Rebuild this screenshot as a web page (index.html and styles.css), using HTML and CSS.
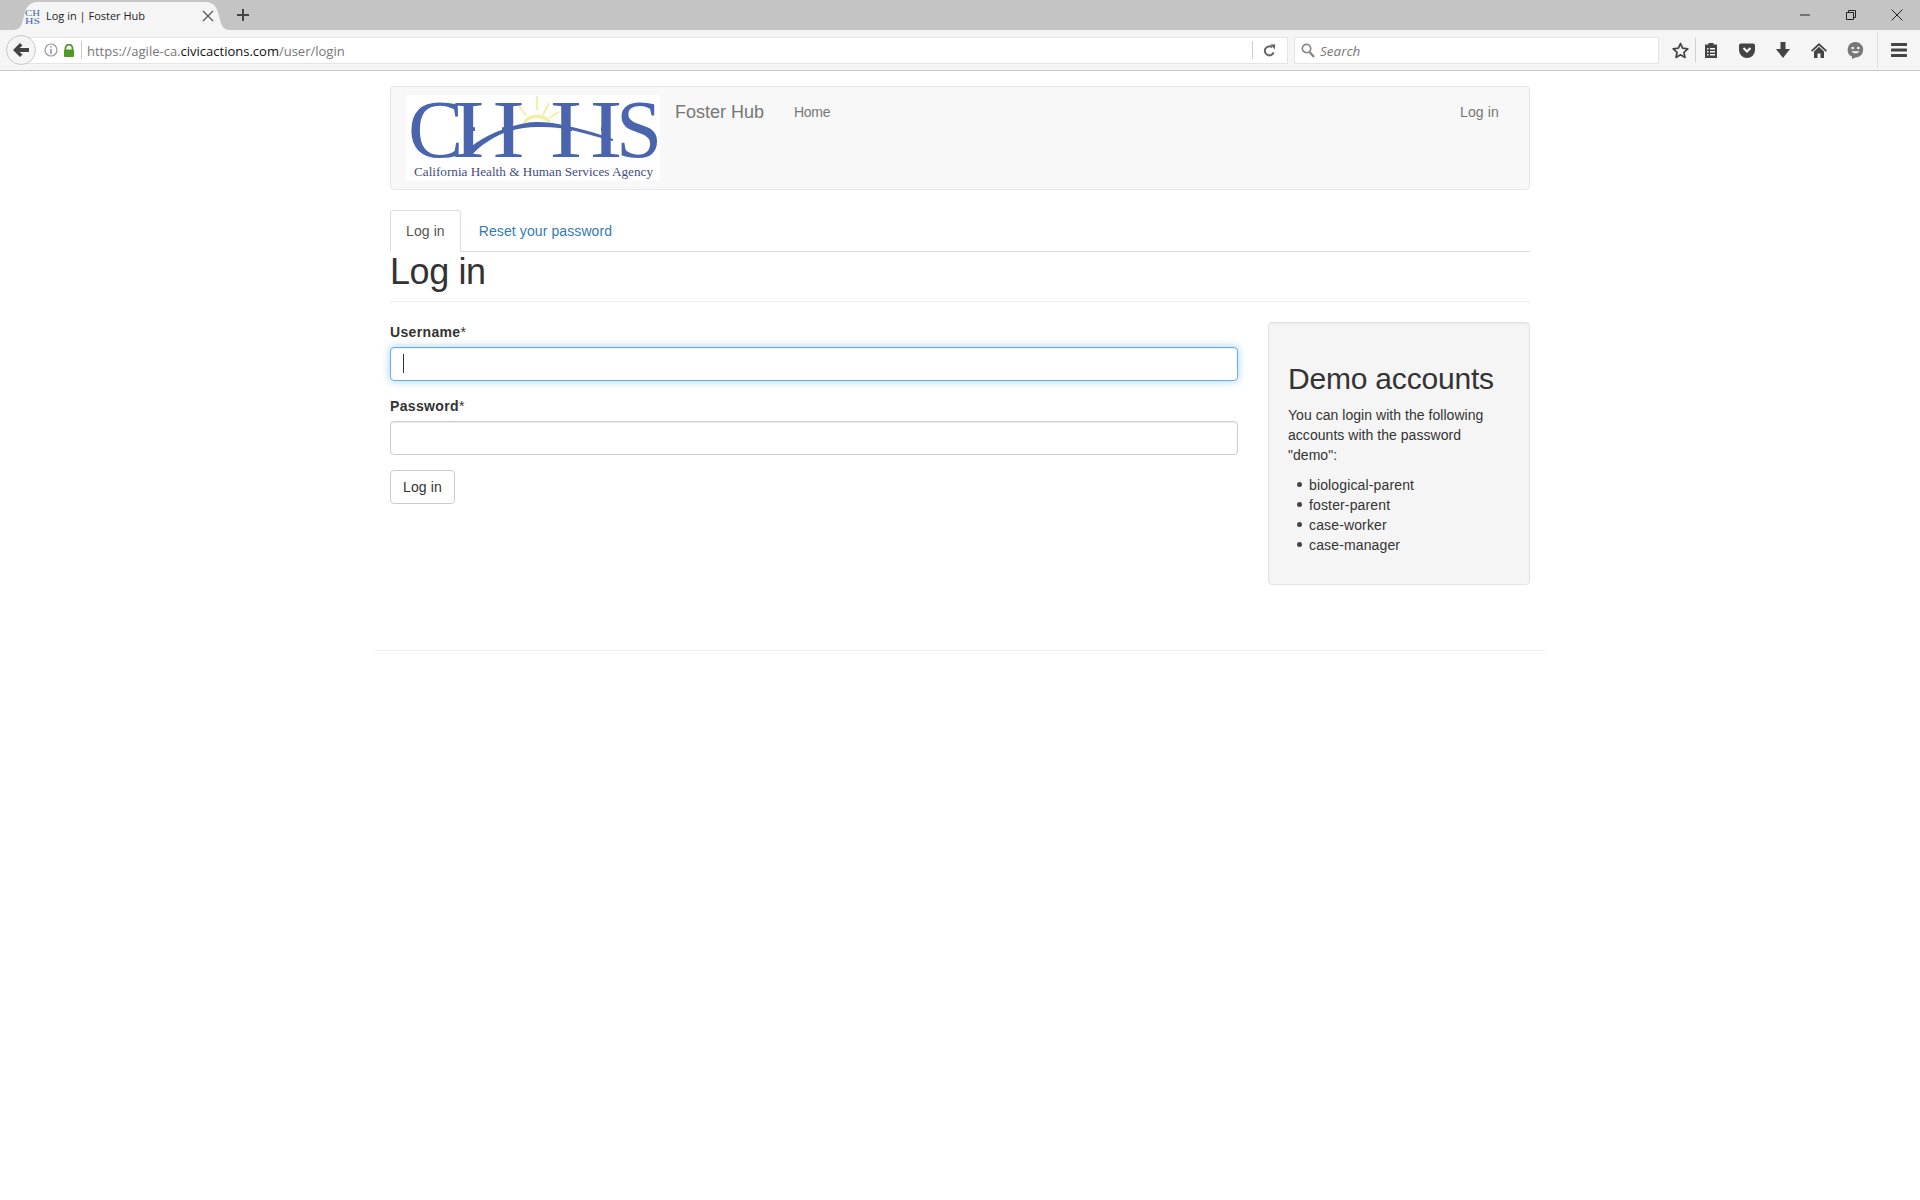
FILE: index.html
```html
<!DOCTYPE html>
<html lang="en">
<head>
    <meta charset="UTF-8">
    <title>Log in | Foster Hub</title>
    <link rel="stylesheet" href="styles.css">
</head>
<body>
    <!-- browser chrome -->
    <div class="tabstrip">
        <div class="tab">
            <svg class="tab-shape" width="217" height="28" viewBox="0 0 217 28"><path d="M0 28C8 28 9 22 11 14C13 5 16 0 25 0H192C201 0 204 5 206 14C208 22 209 28 217 28Z" fill="#f5f5f5"/></svg>
            <svg class="favicon" width="16" height="16" viewBox="0 0 16 16"><text x="0" y="7.5" class="favicon-text" textLength="15" lengthAdjust="spacingAndGlyphs">CH</text><text x="0" y="15.5" class="favicon-text" textLength="15" lengthAdjust="spacingAndGlyphs">HS</text></svg>
            <span class="tab-title">Log in | Foster Hub</span>
            <svg class="tab-close" width="12" height="12" viewBox="0 0 12 12"><path d="M1 1L11 11M11 1L1 11" stroke="#555" stroke-width="1.2" fill="none"/></svg>
        </div>
        <svg class="new-tab" width="12" height="12" viewBox="0 0 12 12"><path d="M6 0V12M0 6H12" stroke="#444" stroke-width="2" fill="none"/></svg>
        <div class="window-btns">
            <div class="window-btn"><svg width="10" height="10" viewBox="0 0 10 10"><path d="M0 5H10" stroke="#222" fill="none"/></svg></div>
            <div class="window-btn"><svg width="10" height="10" viewBox="0 0 10 10"><path d="M.5 2.5H7.5V9.5H.5ZM2.5 2.5V.5H9.5V7.5H7.5" stroke="#222" fill="none"/></svg></div>
            <div class="window-btn"><svg width="12" height="12" viewBox="0 0 12 12"><path d="M.5 .5L11.5 11.5M11.5 .5L.5 11.5" stroke="#222" fill="none"/></svg></div>
        </div>
    </div>
    <div class="toolbar">
        <div class="back-btn">
            <svg width="16" height="14" viewBox="0 0 16 14"><path d="M7 0L0 7L7 14L9.5 11.6L6.6 9H16V5H6.6L9.5 2.4Z" fill="#444"/></svg>
        </div>
        <div class="urlbar">
            <svg class="info-icon" width="14" height="14" viewBox="0 0 14 14"><circle cx="7" cy="7" r="6" fill="none" stroke="#999" stroke-width="1.2"/><path d="M6.2 3H7.8V4.6H6.2ZM6.2 6H7.8V11H6.2Z" fill="#999"/></svg>
            <svg class="lock-icon" width="12" height="13" viewBox="0 0 12 13"><path d="M2.5 6V4A3.5 3.5 0 0 1 9.5 4V6" fill="none" stroke="#4f9a24" stroke-width="1.8"/><rect x="1" y="5.5" width="10" height="7.5" rx="1" fill="#4f9a24"/></svg>
            <span class="url-sep"></span>
            <span class="url">https://agile-ca.<b>civicactions.com</b>/user/login</span>
            <span class="url-sep reload-sep"></span>
            <svg class="reload-icon" width="13" height="13" viewBox="0 0 13 13"><path d="M10.6 8.4A4.5 4.5 0 1 1 9 3.2" fill="none" stroke="#666" stroke-width="2"/><path d="M7.4 .2L12.4 .6L11.6 5.6Z" fill="#666"/></svg>
        </div>
        <div class="searchbar">
            <svg width="14" height="15" viewBox="0 0 14 15"><circle cx="5.5" cy="5.5" r="4.2" fill="none" stroke="#888" stroke-width="1.7"/><path d="M8.5 9L13 14" stroke="#888" stroke-width="2.4"/></svg>
            <span class="search-text">Search</span>
        </div>
        <div class="actions">
            <div class="action star-btn"><svg width="17" height="17" viewBox="0 0 17 17"><path d="M8.5 1.5L10.6 6.2L15.8 6.8L11.9 10.3L13 15.4L8.5 12.8L4 15.4L5.1 10.3L1.2 6.8L6.4 6.2Z" fill="none" stroke="#444" stroke-width="1.7" stroke-linejoin="round"/></svg></div>
            <div class="action clip-btn"><svg width="14" height="16" viewBox="0 0 14 16"><path d="M1 2.5H4.5V1H9.5V2.5H13V16H1Z" fill="#444"/><path d="M3 6H4.5V7.5H3ZM6 6H11V7.5H6ZM3 9H4.5V10.5H3ZM6 9H11V10.5H6ZM3 12H4.5V13.5H3ZM6 12H11V13.5H6Z" fill="#f5f5f5"/></svg></div>
            <div class="action"><svg width="16" height="15" viewBox="0 0 16 15"><path d="M0 2.5A2 2 0 0 1 2 .5H14A2 2 0 0 1 16 2.5V7A8 8 0 0 1 0 7Z" fill="#444"/><path d="M4.5 5L8 8.5L11.5 5" fill="none" stroke="#f5f5f5" stroke-width="2.2"/></svg></div>
            <div class="action"><svg width="14" height="16" viewBox="0 0 14 16"><path d="M4.5 0H9.5V7H14L7 16L0 7H4.5Z" fill="#444"/></svg></div>
            <div class="action"><svg width="16" height="16" viewBox="0 0 16 16"><path d="M8 1L16 8.5L14.8 9.7L8 3.4L1.2 9.7L0 8.5Z" fill="#444"/><path d="M8 4.8L13 9.4V16H9.5V11.5H6.5V16H3V9.4Z" fill="#444"/></svg></div>
            <div class="action"><svg width="17" height="17" viewBox="0 0 17 17"><path d="M8.5 0A7.7 7.7 0 0 1 8.5 15.4L5 17V14.6A7.7 7.7 0 0 1 8.5 0Z" fill="#777"/><circle cx="5.7" cy="6" r="1.3" fill="#f5f5f5"/><circle cx="11.3" cy="6" r="1.3" fill="#f5f5f5"/><path d="M4.5 9.2C6 12 11 12 12.5 9.2Z" fill="#f5f5f5"/></svg></div>
            <div class="action menu-btn"><svg width="16" height="14" viewBox="0 0 16 14"><path d="M1 0H15A1 1 0 0 1 15 3H1A1 1 0 0 1 1 0ZM1 5.5H15A1 1 0 0 1 15 8.5H1A1 1 0 0 1 1 5.5ZM1 11H15A1 1 0 0 1 15 14H1A1 1 0 0 1 1 11Z" fill="#444"/></svg></div>
        </div>
    </div>

    <!-- page -->
    <div class="container">
        <nav class="navbar">
            <svg class="logo" width="254" height="86" viewBox="0 0 254 86">
                <defs>
                    <!-- hides the straight crossbar of each H, the arc stands in for it -->
                    <clipPath id="h-left">
                        <rect x="40" y="-20" width="80" height="44"/>
                        <rect x="40" y="44" width="80" height="30"/>
                        <rect x="40" y="20" width="29" height="30"/>
                        <rect x="96" y="20" width="24" height="30"/>
                    </clipPath>
                    <clipPath id="h-right">
                        <rect x="140" y="-20" width="80" height="44"/>
                        <rect x="140" y="44" width="80" height="30"/>
                        <rect x="140" y="20" width="26" height="30"/>
                        <rect x="195" y="20" width="24" height="30"/>
                    </clipPath>
                </defs>
                <rect width="254" height="86" fill="#fff"/>
                <path d="M117 28C120 17 141 17 145 27L141 27C136 22 125 22 120 28Z" fill="#f4efa8"/>
                <path d="M131 1V15M112 9L120 21M143 8L137 20M153 17L143 23" stroke="#f4efa8" stroke-width="2" fill="none"/>
                <text x="2" y="62" class="logo-big">C</text>
                <g clip-path="url(#h-left)"><text x="46.5" y="62" class="logo-big" textLength="72" lengthAdjust="spacingAndGlyphs">H</text></g>
                <g clip-path="url(#h-right)"><text x="144" y="62" class="logo-big" textLength="72" lengthAdjust="spacingAndGlyphs">H</text></g>
                <text x="210" y="62" class="logo-big">S</text>
                <path d="M56 61C66 48 84 38 104 32C113 29 122 27 131 27C140 27 149 28 157 30C172 33 187 37 207 44L207 46C187 41 172 36 157 33.5C149 32 140 32 131 32C122 32 113 33.5 104 36C90 40 74 50 65 61Z" fill="#4a65ad"/>
                <text x="8" y="81" class="logo-small" textLength="239" lengthAdjust="spacingAndGlyphs">California Health &amp; Human Services Agency</text>
            </svg>
            <a class="brand">Foster Hub</a>
            <a class="nav-link nav-home">Home</a>
            <a class="nav-link nav-right">Log in</a>
        </nav>

        <ul class="tabs">
            <li class="tabs-item active">Log in</li>
            <li class="tabs-item">Reset your password</li>
        </ul>
        <div class="page-header">
            <h1>Log in</h1>
        </div>

        <div class="row">
            <form class="login-form">
                <div class="form-group">
                    <label>Username<span class="req">*</span></label>
                    <div class="input-wrap">
                        <input type="text" class="form-control focused">
                        <span class="caret"></span>
                    </div>
                </div>
                <div class="form-group">
                    <label>Password<span class="req">*</span></label>
                    <input type="password" class="form-control">
                </div>
                <button type="button" class="btn">Log in</button>
            </form>
            <aside class="well">
                <h2>Demo accounts</h2>
                <p>You can login with the following accounts with the password "demo":</p>
                <ul>
                    <li>biological-parent</li>
                    <li>foster-parent</li>
                    <li>case-worker</li>
                    <li>case-manager</li>
                </ul>
            </aside>
        </div>
        <hr class="footer-line">
    </div>
</body>
</html>
```

FILE: styles.css
```css
* {
    box-sizing: border-box;
}
body {
    margin: 0;
    font-family: "Liberation Sans", Arial, sans-serif;
    font-size: 14px;
    line-height: 20px;
    color: #333;
    background: #fff;
    overflow: hidden;
}

/* browser chrome */
.tabstrip {
    display: flex;
    align-items: flex-end;
    height: 30px;
    padding-left: 13px;
    background: #c4c4c4;
    font-family: "Open Sans", sans-serif;
}
.tab {
    position: relative;
    display: flex;
    align-items: center;
    width: 217px;
    height: 28px;
    padding: 0 16px 0 12px;
}
.tab-shape {
    position: absolute;
    left: 0;
    top: 0;
}
.favicon, .tab-title, .tab-close {
    position: relative;
}
.favicon {
    overflow: visible;
}
.favicon-text {
    font-family: "Liberation Serif", serif;
    font-size: 8.5px;
    fill: #4a65ad;
}
.tab-title {
    margin-left: 5px;
    font-size: 11px;
    color: #222;
    white-space: nowrap;
}
.tab-close {
    margin-left: auto;
}
.new-tab {
    margin: 0 0 9px 7px;
}
.window-btns {
    display: flex;
    margin-left: auto;
    align-self: flex-start;
}
.window-btn {
    display: flex;
    align-items: center;
    justify-content: center;
    width: 46px;
    height: 29px;
}
.toolbar {
    display: flex;
    align-items: center;
    height: 41px;
    background: #f5f5f5;
    border-bottom: 1px solid #c8c8c8;
    font-family: "Open Sans", sans-serif;
}
.back-btn {
    position: relative;
    display: flex;
    align-items: center;
    justify-content: center;
    flex: none;
    width: 30px;
    height: 30px;
    margin-left: 6px;
    background: #f5f5f5;
    border: 1px solid #c8c8c8;
    border-radius: 50%;
}
.urlbar, .searchbar {
    display: flex;
    align-items: center;
    height: 27px;
    background: #fff;
    border: 1px solid #e4e4e4;
}
.urlbar {
    flex: 1;
    margin-left: -15px;
    padding-left: 21px;
}
.info-icon {
    margin-left: 1px;
}
.lock-icon {
    margin-left: 5px;
}
.url-sep {
    width: 1px;
    height: 18px;
    margin: 0 5px 0 6px;
    background: #ccc;
}
.url {
    padding-top: 2px;
    font-size: 13px;
    color: #777;
    white-space: nowrap;
}
.url b {
    font-weight: 400;
    color: #111;
}
.reload-sep {
    margin: 0 10px 0 auto;
}
.reload-icon {
    margin-right: 11px;
}
.searchbar {
    flex: none;
    width: 365px;
    margin-left: 6px;
    padding-left: 6px;
}
.search-text {
    margin-left: 5px;
    padding-top: 2px;
    font-size: 13.5px;
    font-style: italic;
    color: #777;
}
.actions {
    display: flex;
    align-items: center;
    flex: none;
    height: 100%;
    margin-left: 4px;
}
.action {
    display: flex;
    align-items: center;
    justify-content: center;
    width: 36px;
    height: 24px;
}
.star-btn {
    width: 33px;
    padding-left: 3px;
    border-right: 1px solid #d0d0d0;
}
.clip-btn {
    width: 30px;
    margin-right: 3px;
}
.menu-btn {
    width: 43px;
    height: 36px;
    margin-left: 4px;
    border-left: 1px solid #ddd;
}

/* page */
.container {
    width: 1170px;
    margin: 0 auto;
    padding: 15px 15px 0;
}
.navbar {
    display: flex;
    align-items: flex-start;
    height: 104px;
    margin-bottom: 20px;
    padding: 8px 15px;
    background: #f8f8f8;
    border: 1px solid #e7e7e7;
    border-radius: 4px;
}
.logo {
    flex: none;
    overflow: visible;
}
.brand {
    margin: 7px 0 0 15px;
    font-size: 18px;
    color: #777;
}
.nav-link {
    margin: 7px 0 0 30px;
    color: #777;
}
.nav-home {
    letter-spacing: -.3px;
}
.nav-right {
    margin-left: auto;
    margin-right: 15px;
    letter-spacing: .14px;
}
.tabs {
    display: flex;
    margin: 0;
    padding: 0;
    list-style: none;
    border-bottom: 1px solid #ddd;
    letter-spacing: .1px;
}
.tabs-item {
    margin-bottom: -1px;
    padding: 10px 15px;
    color: #337ab7;
    border: 1px solid transparent;
    border-radius: 4px 4px 0 0;
}
.tabs-item.active {
    margin-right: 2px;
    color: #555;
    background: #fff;
    border-color: #ddd #ddd #fff;
}
.page-header {
    margin-bottom: 20px;
    padding-bottom: 9px;
    border-bottom: 1px solid #eee;
}
h1 {
    margin: 0;
    font-size: 36px;
    font-weight: 500;
    line-height: 39.6px;
    letter-spacing: -.4px;
}
.row {
    display: flex;
    justify-content: space-between;
    align-items: flex-start;
}
.login-form {
    width: 848px;
}
.form-group {
    margin-bottom: 15px;
}
label {
    display: block;
    margin-bottom: 5px;
    font-weight: 700;
    letter-spacing: .35px;
}
.req {
    font-weight: 400;
}
.input-wrap {
    position: relative;
}
.form-control {
    display: block;
    width: 100%;
    height: 34px;
    padding: 6px 12px;
    background: #fff;
    border: 1px solid #ccc;
    border-radius: 4px;
    box-shadow: inset 0 1px 1px rgba(0, 0, 0, .075);
}
.form-control.focused {
    border-color: #66afe9;
    box-shadow: inset 0 1px 1px rgba(0, 0, 0, .075), 0 0 8px rgba(102, 175, 233, .6);
}
.caret {
    position: absolute;
    left: 13px;
    top: 7px;
    width: 1px;
    height: 19px;
    background: #333;
}
.btn {
    display: block;
    height: 34px;
    padding: 6px 12px;
    font: inherit;
    letter-spacing: .14px;
    color: #333;
    background: #fff;
    border: 1px solid #ccc;
    border-radius: 4px;
}
.well {
    width: 262px;
    margin-bottom: 20px;
    padding: 19px;
    background: #f5f5f5;
    border: 1px solid #e3e3e3;
    border-radius: 4px;
    box-shadow: inset 0 1px 1px rgba(0, 0, 0, .05);
}
.well h2 {
    margin: 20px 0 10px;
    font-size: 30px;
    font-weight: 500;
    line-height: 33px;
    white-space: nowrap;
    letter-spacing: -.2px;
}
.well p {
    margin: 0 0 10px;
    letter-spacing: .04px;
}
.well ul {
    margin: 0 0 10px;
    padding-left: 9px;
    list-style: none;
    letter-spacing: .14px;
}
.well li {
    display: flex;
    align-items: center;
    gap: 7px;
}
.well li::before {
    content: "";
    width: 5px;
    height: 5px;
    background: #444;
    border-radius: 50%;
}
.footer-line {
    margin: 45px -15px 0;
    border: 0;
    border-top: 1px solid #eee;
}

/* logo lettering */
.logo-big {
    font-family: "Liberation Serif", serif;
    font-size: 83px;
    fill: #4a65ad;
}
.logo-small {
    font-family: "Liberation Serif", serif;
    font-size: 12.5px;
    fill: #3f4d85;
}
```
